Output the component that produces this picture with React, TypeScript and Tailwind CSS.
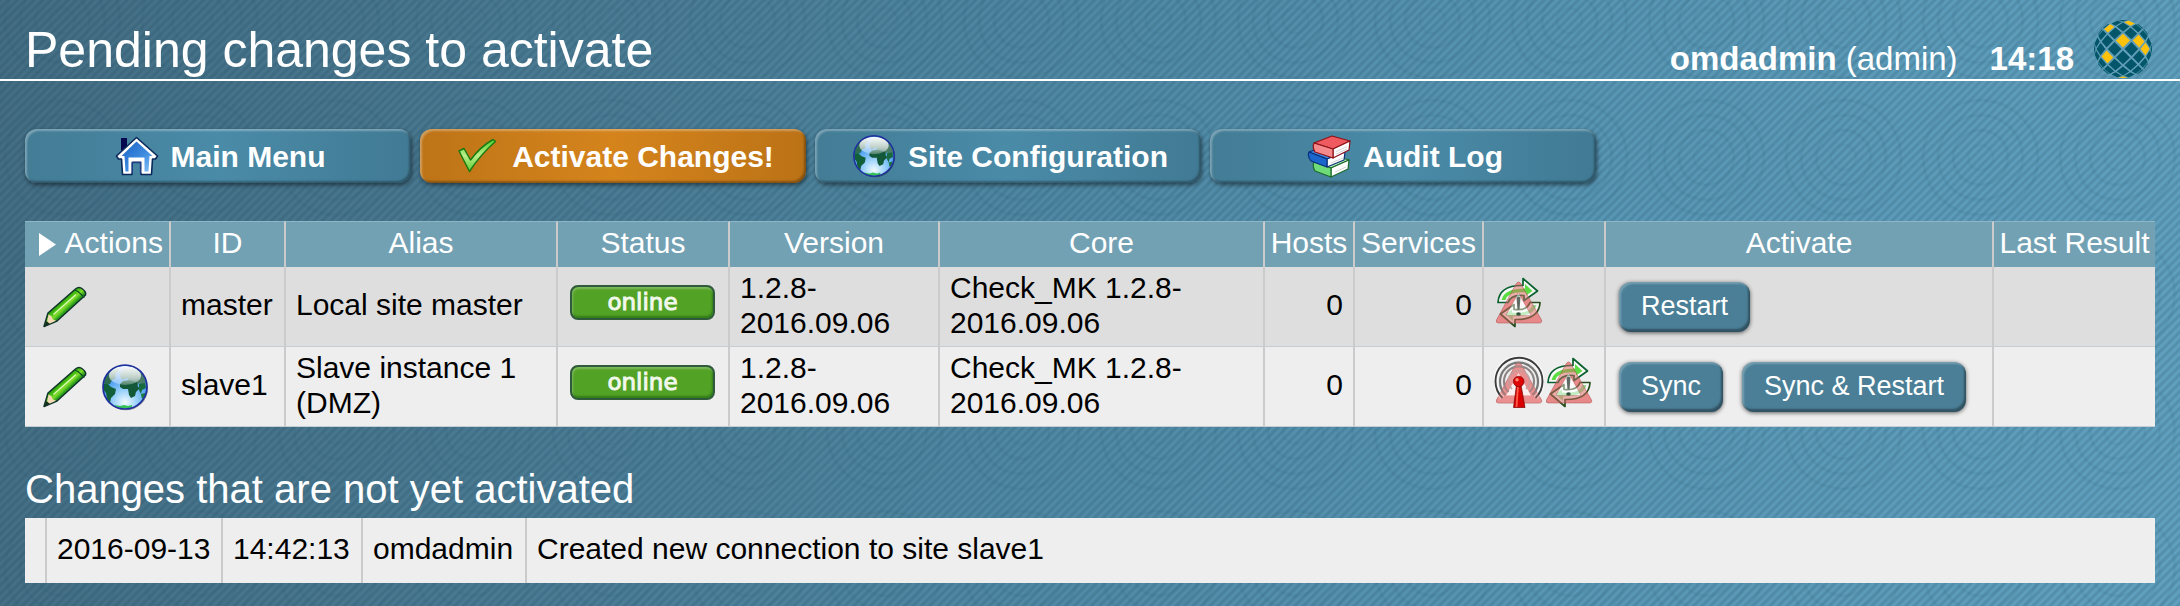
import React from "react";

type IconProps = { className?: string };

/* ---------- icons ---------- */

function HouseIcon({ className }: IconProps) {
  return (
    <svg viewBox="0 0 44 44" className={className} aria-hidden="true">
      <defs>
        <linearGradient id="houseFill" x1="0" y1="0" x2="1" y2="1">
          <stop offset="0" stopColor="#1a5fc4" />
          <stop offset="0.6" stopColor="#3f8ee0" />
          <stop offset="1" stopColor="#8cc6f8" />
        </linearGradient>
      </defs>
      <path d="M6 4h6v10l-6 5z" fill="#06084f" />
      <path
        d="M21.500 3.500L42.500 22l-2 3H37.500L36.500 40.500H26V28H17V40.500H7.500L6.500 25H3.500L1.500 22z"
        fill="#fff"
        stroke="#0b2a5c"
        strokeWidth="1.600"
        strokeLinejoin="round"
      />
      <path d="M21.500 7.500L37.500 22H34.500L33.500 37.500H29V25H14V37.500H10.500L9.500 22H6.500z" fill="url(#houseFill)" />
      <path d="M13.500 23.500h16V39h-3V27.500H16.500V39h-3z" fill="#fff" />
      <path d="M17.500 28.500h8V40" fill="none" stroke="#1c3f86" strokeWidth="1.300" />
      <path d="M17.200 28.500V40" stroke="#1c3f86" strokeWidth="1.300" />
    </svg>
  );
}

function CheckIcon({ className }: IconProps) {
  return (
    <svg viewBox="0 0 44 44" className={className} aria-hidden="true">
      <defs>
        <linearGradient id="checkFill" x1="0" y1="0" x2="0" y2="1">
          <stop offset="0" stopColor="#4fd42f" />
          <stop offset="0.500" stopColor="#b8ee88" />
          <stop offset="1" stopColor="#5ccf35" />
        </linearGradient>
      </defs>
      <path
        d="M3 17l5-2.500 6.500 11.500Q24 13 37 5.500l2.500 2Q24 21 13.500 37.500z"
        fill="url(#checkFill)"
        stroke="#1d7a12"
        strokeWidth="1.500"
        strokeLinejoin="round"
      />
    </svg>
  );
}

function GlobeIcon({ className }: IconProps) {
  return (
    <svg viewBox="0 0 48 48" className={className} aria-hidden="true">
      <defs>
        <radialGradient id="globeSea" cx="0.500" cy="0.850" r="0.850">
          <stop offset="0" stopColor="#f2fbff" />
          <stop offset="0.300" stopColor="#9fd4fb" />
          <stop offset="0.650" stopColor="#4da0f2" />
          <stop offset="1" stopColor="#2466c4" />
        </radialGradient>
        <linearGradient id="globeGloss" x1="0" y1="0" x2="0" y2="1">
          <stop offset="0" stopColor="#fff" stopOpacity="0.980" />
          <stop offset="0.600" stopColor="#fff" stopOpacity="0.650" />
          <stop offset="1" stopColor="#fff" stopOpacity="0.250" />
        </linearGradient>
        <clipPath id="globeClip">
          <circle cx="24" cy="24" r="21.500" />
        </clipPath>
      </defs>
      <circle cx="25" cy="25.300" r="22" fill="#000" opacity="0.350" />
      <circle cx="24" cy="24" r="22" fill="url(#globeSea)" />
      <g clipPath="url(#globeClip)">
        <path d="M1 12l7-7 8-2 2 5-4 3 1 4-4 2-2 4-5 0-3-2z" fill="#2c6b50" />
        <path d="M2 21l5 0 3 3 5 2-1 5-4 4-1 5-3-4-1-6-4-5z" fill="#12603a" />
        <path d="M20 9l4-4 8-1 8 5 5 8-1 6-3 1-2-4-3 2-2-4-5 0-3-3-5 2-2-4z" fill="#4a7c68" />
        <path d="M19 21l3-3 6-1 8 2 1 5 2 1-4 4-1 4-4 2-2-3-1-6-5 0-3-2z" fill="#14583a" />
        <path d="M38 21l6-1 1 5-4 2-1 4-2-4z" fill="#1a6a40" />
        <path d="M40 31l4-1 0 4-3 2z" fill="#1a7a40" />
        <path d="M14 42l5 1 4-1 4 1 4-1 0 4H14z" fill="#35c257" />
      </g>
      <ellipse cx="24" cy="12.500" rx="16" ry="9.500" fill="url(#globeGloss)" />
      <circle cx="24" cy="24" r="22" fill="none" stroke="#1f2f9e" strokeWidth="1.700" />
    </svg>
  );
}

function BooksIcon({ className }: IconProps) {
  return (
    <svg viewBox="0 0 44 44" className={className} aria-hidden="true">
      <g strokeLinejoin="round" strokeWidth="1.200">
        <path d="M7 28l18-7 17 5-18 8z" fill="#b4f0b4" stroke="#1c6b2a" />
        <path d="M24 34l18-8-1 9-17 8z" fill="#fff" stroke="#1c6b2a" />
        <path d="M7 28l17 6v9L8 37Q5 32 7 28z" fill="#6fdc7a" stroke="#1c6b2a" />
        <path d="M2 18l18-7 18 6-18 8z" fill="#3a86e0" stroke="#0a2f7a" />
        <path d="M20 25l18-7-1 8-17 7z" fill="#fff" stroke="#0a2f7a" />
        <path d="M2 18l18 7v8L4 27Q0 22 2 18z" fill="#1a66cc" stroke="#0a2f7a" />
        <path d="M7 9l18-7 18 5-17 8z" fill="#ee5a60" stroke="#8d1218" />
        <path d="M26 15l17-8-1 9-16 8z" fill="#fff" stroke="#8d1218" />
        <path d="M7 9l19 6v9L8 18Q5 13 7 9z" fill="#f58a8c" stroke="#8d1218" />
      </g>
      <path d="M29 17.500l11-5M29 20l11-5M24 29l12-5M28 38l11-5" stroke="#c9c9c9" strokeWidth="0.800" />
    </svg>
  );
}

function PencilIcon({ className }: IconProps) {
  return (
    <svg viewBox="0 0 48 48" className={className} aria-hidden="true">
      <defs>
        <linearGradient id="pencilFill" x1="0.350" y1="0.350" x2="0.650" y2="0.650">
          <stop offset="0" stopColor="#0f7a0f" />
          <stop offset="0.250" stopColor="#3fb80e" />
          <stop offset="0.500" stopColor="#7fdc2a" />
          <stop offset="0.700" stopColor="#2aa01a" />
          <stop offset="1" stopColor="#0c6a14" />
        </linearGradient>
      </defs>
      <path
        d="M7 30L34.500 6Q38 3 41.500 6Q45.500 9 44.500 12L16 38L3 43.500z"
        fill="url(#pencilFill)"
        stroke="#12342c"
        strokeWidth="1.500"
        strokeLinejoin="round"
      />
      <path d="M33.500 7l3.500 1.500 5.500 5 1 1" fill="none" stroke="#12502a" strokeWidth="1.200" />
      <path d="M13 31L34.500 12" stroke="#d8f8b0" strokeWidth="1.600" strokeLinecap="round" />
      <path d="M7.500 31.500l3 1.500 1 3 3.500 1.800L5.500 42z" fill="#f3d9b4" />
      <path d="M5.500 38l3.500 3L3 43.500z" fill="#14301c" />
    </svg>
  );
}

const CONE_OUTER = "M22 8Q24.500 4 27 8L47.500 44Q48.500 47 45 47H4.500Q1.500 47 2.500 44z";
const CONE_INNER = "M24.500 17L37 39.500H12z";
const HALF_ARROW = "M4 26.500Q5 9 29 9.500V2.500L43.500 15L30 24.500V19.500Q17 18 14 26.500z";
const HALF_ARROW_GLOW = "M7.500 24Q10 12.500 31 12.500V8L38.500 15L32 19.500V16.500Q14 15 11.500 24z";

function RestartNeededIcon({ className }: IconProps) {
  return (
    <svg viewBox="0 0 50 52" className={className} role="img" aria-label="Restart needed">
      <path d={CONE_OUTER} fill="#f0a3a3" />
      <path d={CONE_INNER} fill="#fbf3f3" />
      {[0, 180].map((turn) => (
        <g key={turn} transform={`rotate(${turn} 25 26.500)`}>
          <path
            d={HALF_ARROW}
            fill="#fff"
            fillOpacity="0.700"
            stroke={turn === 0 ? "#0b6030" : "#2a4f1f"}
            strokeWidth="1.700"
            strokeLinejoin="round"
          />
          <path d={HALF_ARROW_GLOW} fill={turn === 0 ? "#3fd622" : "#7ed67a"} fillOpacity="0.850" />
        </g>
      ))}
      <path
        d={`${CONE_OUTER}${CONE_INNER}`}
        fill="#dd6a6a"
        fillOpacity="0.450"
        fillRule="evenodd"
        stroke="#a84c4c"
        strokeOpacity="0.500"
      />
      <path d={CONE_INNER} fill="#fff" fillOpacity="0.450" />
      <path d="M22.500 21.500Q24.500 20 26.500 21.500L25.500 33.500h-2z" fill="#5f6b63" />
      <ellipse cx="24.500" cy="38" rx="2.300" ry="1.800" fill="#33513c" />
    </svg>
  );
}

function SyncNeededIcon({ className }: IconProps) {
  return (
    <svg viewBox="0 0 50 52" className={className} role="img" aria-label="Synchronisation needed">
      <path d={CONE_OUTER} fill="#e88a8a" fillOpacity="0.850" stroke="#b56464" strokeOpacity="0.700" />
      <path d={CONE_INNER} fill="#fbeeee" />
      <g fill="none">
        <path d="M8.500 42A23.500 23.500 0 1 1 41.500 42" stroke="#fff" strokeOpacity="0.600" strokeWidth="4.500" />
        <path d="M8.500 42A23.500 23.500 0 1 1 41.500 42" stroke="#3c3c3c" strokeWidth="1.900" />
        <path d="M11.500 39A19 19 0 1 1 38.500 39" stroke="#777" strokeWidth="2.200" />
        <path d="M14.500 36A15 15 0 1 1 35.500 36" stroke="#8d8585" strokeWidth="2.200" />
        <path d="M18 33A10.500 10.500 0 1 1 32 33" stroke="#b9a6a6" strokeWidth="1.600" />
      </g>
      <path
        d={`${CONE_OUTER}${CONE_INNER}`}
        fill="#f08080"
        fillOpacity="0.350"
        fillRule="evenodd"
      />
      <path d="M22.500 29h4.500L31 51.500H19.500z" fill="#d80000" stroke="#7a0000" strokeWidth="0.700" />
      <path d="M24 30L22.500 51" stroke="#ff5a4a" strokeWidth="1.800" />
      <circle cx="24.700" cy="25.500" r="5.300" fill="#de0505" stroke="#7a0000" strokeWidth="0.700" />
      <circle cx="23" cy="23.700" r="1.700" fill="#ff8a78" />
    </svg>
  );
}

/* Sphere covered by a lattice of diamonds, seen in orthographic projection. */
const LOGO_RADIUS = 29;
const LOGO_STEP = 0.3;
const LOGO_GOLD = ["0,-1", "2,-1", "3,0", "-2,1", "-2,-3", "1,-4", "0,5"];

function project(a: number, b: number): string {
  const length = Math.hypot(a, b);
  if (length === 0) return `${LOGO_RADIUS},${LOGO_RADIUS}`;
  const r = LOGO_RADIUS * Math.sin(Math.min(length * LOGO_STEP, Math.PI / 2));
  const x = LOGO_RADIUS + (r * a) / length;
  const y = LOGO_RADIUS + (r * b) / length;
  return `${x.toFixed(2)},${y.toFixed(2)}`;
}

function LogoIcon({ className }: IconProps) {
  const half = 0.83;
  const tiles: { key: string; points: string }[] = [];
  for (let a = -5; a <= 5; a++) {
    for (let b = -5; b <= 5; b++) {
      if ((a + b) % 2 === 0 || Math.hypot(a, b) > 5.15) continue;
      tiles.push({
        key: `${a},${b}`,
        points: [project(a - half, b), project(a, b - half), project(a + half, b), project(a, b + half)].join(" "),
      });
    }
  }
  return (
    <svg viewBox="0 0 58 58" className={className} role="img" aria-label="Check_MK">
      <circle cx="29" cy="29" r="29" fill="#6ba6bd" fillOpacity="0.600" />
      {tiles.map((tile) => (
        <polygon key={tile.key} points={tile.points} fill={LOGO_GOLD.includes(tile.key) ? "#ffc20a" : "#03566a"} />
      ))}
    </svg>
  );
}

/* ---------- building blocks ---------- */

type NavItem = { label: string; icon: React.ReactNode; highlight?: boolean };

const navItems: NavItem[] = [
  { label: "Main Menu", icon: <HouseIcon className="size-11" /> },
  { label: "Activate Changes!", icon: <CheckIcon className="size-11" />, highlight: true },
  { label: "Site Configuration", icon: <GlobeIcon className="size-11" /> },
  { label: "Audit Log", icon: <BooksIcon className="size-11" /> },
];

function NavButton({ label, icon, highlight }: NavItem) {
  const tone = highlight
    ? "bg-linear-to-r from-[#bd7417] via-[#d5841c] to-[#bb7216]"
    : "bg-linear-to-r from-[#437c95] via-[#4a8ba8] to-[#417a94]";
  return (
    <a
      href="#"
      className={`flex h-[54px] w-[386px] items-center justify-center gap-3 rounded-xl pl-1 text-[30px] leading-[35px] font-bold whitespace-nowrap shadow-[inset_2px_2px_2px_rgba(255,255,255,0.3),inset_-2px_-2px_2px_rgba(0,0,0,0.3),1px_2px_4px_rgba(0,0,0,0.5)] ${tone}`}
    >
      {icon}
      {label}
    </a>
  );
}

function ActionButton({ children }: { children: React.ReactNode }) {
  return (
    <button
      type="button"
      className="h-[50px] rounded-xl bg-[#4a7f97] px-[22px] text-[27px] leading-[31px] whitespace-nowrap text-white shadow-[inset_2px_2px_2px_rgba(255,255,255,0.25),inset_-2px_-3px_2px_rgba(0,0,0,0.35),0px_1px_4px_rgba(0,0,0,0.6)]"
    >
      {children}
    </button>
  );
}

function StatusBadge({ text }: { text: string }) {
  return (
    <span className="flex h-[35px] w-[145px] items-center justify-center rounded-lg border-2 border-[#2f5a3c] bg-[#52a226] font-['DejaVu_Sans',sans-serif] text-[23px] leading-[27px] text-[#f2f8ec] shadow-[inset_1px_2px_2px_rgba(255,255,255,0.25),inset_-1px_-2px_2px_rgba(0,70,0,0.4)] [-webkit-text-stroke:1px_#f2f8ec]">
      {text}
    </span>
  );
}

type Site = {
  id: string;
  alias: string;
  version: string;
  core: string;
  hosts: number;
  services: number;
  remote: boolean;
  actions: string[];
};

const sites: Site[] = [
  {
    id: "master",
    alias: "Local site master",
    version: "1.2.8-2016.09.06",
    core: "Check_MK 1.2.8-2016.09.06",
    hosts: 0,
    services: 0,
    remote: false,
    actions: ["Restart"],
  },
  {
    id: "slave1",
    alias: "Slave instance 1 (DMZ)",
    version: "1.2.8-2016.09.06",
    core: "Check_MK 1.2.8-2016.09.06",
    hosts: 0,
    services: 0,
    remote: true,
    actions: ["Sync", "Sync & Restart"],
  },
];

const headings = ["ID", "Alias", "Status", "Version", "Core", "Hosts", "Services", "", "Activate", "Last Result"];

const cell = "border-r-2 border-[#cbcbcb] px-2.5 pb-1 last:border-r-0";

function SitesTable() {
  return (
    <table className="mt-[38px] w-full table-fixed border-separate border-spacing-0 text-[30px] leading-[35px]">
      <colgroup>
        <col className="w-[146px]" />
        <col className="w-[115px]" />
        <col className="w-[272px]" />
        <col className="w-[172px]" />
        <col className="w-[210px]" />
        <col className="w-[325px]" />
        <col className="w-[90px]" />
        <col className="w-[129px]" />
        <col className="w-[122px]" />
        <col />
        <col className="w-[161px]" />
      </colgroup>
      <thead>
        <tr className="h-[46px] bg-[#73a1b4] text-white">
          <th className="border-t border-r-2 border-t-[#8db6c6] border-r-[#cbcbcb] pr-1.5 pb-[5px] font-normal">
            <span className="flex items-center justify-end gap-[9px]">
              <svg viewBox="0 0 17 23" className="mt-1 h-[23px] w-[17px]" aria-hidden="true">
                <path d="M0 0L17 11.500L0 23z" fill="#fff" />
              </svg>
              Actions
            </span>
          </th>
          {headings.map((heading, i) => (
            <th
              key={i}
              className="border-t border-r-2 border-t-[#8db6c6] border-r-[#cbcbcb] pb-[5px] font-normal whitespace-nowrap last:border-r-0"
            >
              {heading}
            </th>
          ))}
        </tr>
      </thead>
      <tbody>
        {sites.map((site) => (
          <tr
            key={site.id}
            className="h-20 text-black odd:bg-[#dedede] even:bg-[#eeeeee] [&>td]:border-b [&>td]:border-b-[#c3cdd2]"
          >
            <td className="border-r-2 border-[#cbcbcb] pl-4">
              <div className="flex gap-3">
                <a href="#" aria-label={`Edit ${site.id}`}>
                  <PencilIcon className="size-12" />
                </a>
                {site.remote && (
                  <a href="#" aria-label={`Global settings of ${site.id}`}>
                    <GlobeIcon className="size-12" />
                  </a>
                )}
              </div>
            </td>
            <td className={cell}>{site.id}</td>
            <td className={cell}>{site.alias}</td>
            <td className="border-r-2 border-[#cbcbcb] pb-2 pl-3">
              <StatusBadge text="online" />
            </td>
            <td className={cell}>{site.version}</td>
            <td className={cell}>{site.core}</td>
            <td className={`${cell} text-right`}>{site.hosts}</td>
            <td className={`${cell} text-right`}>{site.services}</td>
            <td className="border-r-2 border-[#cbcbcb] pb-2.5 pl-2.5">
              <div className="flex">
                {site.remote && <SyncNeededIcon className="h-[52px] w-[50px]" />}
                <RestartNeededIcon className="h-[52px] w-[50px]" />
              </div>
            </td>
            <td className="border-r-2 border-[#cbcbcb] pl-[13px]">
              <div className="flex gap-[19px]">
                {site.actions.map((action) => (
                  <ActionButton key={action}>{action}</ActionButton>
                ))}
              </div>
            </td>
            <td />
          </tr>
        ))}
      </tbody>
    </table>
  );
}

function ChangesTable() {
  return (
    <table className="mt-1.5 w-full border-separate border-spacing-0 text-[30px] leading-[35px] text-black">
      <tbody>
        <tr className="h-[65px] bg-[#eeeeee] whitespace-nowrap">
          <td className="w-[22px] border-r-2 border-[#cbcbcb]" />
          <td className={`${cell} w-[176px]`}>2016-09-13</td>
          <td className={`${cell} w-[140px]`}>14:42:13</td>
          <td className={`${cell} w-[164px]`}>omdadmin</td>
          <td className={cell}>Created new connection to site slave1</td>
        </tr>
      </tbody>
    </table>
  );
}

/* ---------- page ---------- */

const pageBackground =
  "[background:radial-gradient(circle_at_center,transparent_11px,rgba(30,80,105,0.08)_12px,transparent_15px,transparent_25px,rgba(30,80,105,0.1)_27px,transparent_30px,transparent_40px,rgba(30,80,105,0.1)_42px,transparent_45px,transparent_55px,rgba(30,80,105,0.1)_57px,transparent_60px)_-6px_-48px/137px_137px,repeating-linear-gradient(135deg,rgba(20,60,80,0.22)_0px,rgba(20,60,80,0)_3px,rgba(20,60,80,0.22)_6px),linear-gradient(97deg,#456f85_0%,#4d7f98_30%,#528ca8_50%,#5a99b7_72%,#63a4c2_100%)]";

export default function App() {
  return (
    <div className={`min-h-screen font-['Liberation_Sans',Arial,sans-serif] text-white ${pageBackground}`}>
      <header className="flex h-[81px] items-end justify-between border-b-2 border-white pr-7 pb-px pl-[25px]">
        <h1 className="text-[50px] leading-[56px]">Pending changes to activate</h1>
        <div className="flex items-end text-[33px] leading-[38px] whitespace-nowrap">
          <span>
            <b>omdadmin</b> (admin)
          </span>
          <b className="ml-8">14:18</b>
          <a href="#" className="ml-5">
            <LogoIcon className="size-[58px]" />
          </a>
        </div>
      </header>
      <main className="px-[25px] pb-[23px]">
        <nav className="mt-12 flex flex-wrap gap-[9px]">
          {navItems.map((item) => (
            <NavButton key={item.label} {...item} />
          ))}
        </nav>
        <SitesTable />
        <h2 className="mt-[39px] text-[40px] leading-[46px]">Changes that are not yet activated</h2>
        <ChangesTable />
      </main>
    </div>
  );
}
